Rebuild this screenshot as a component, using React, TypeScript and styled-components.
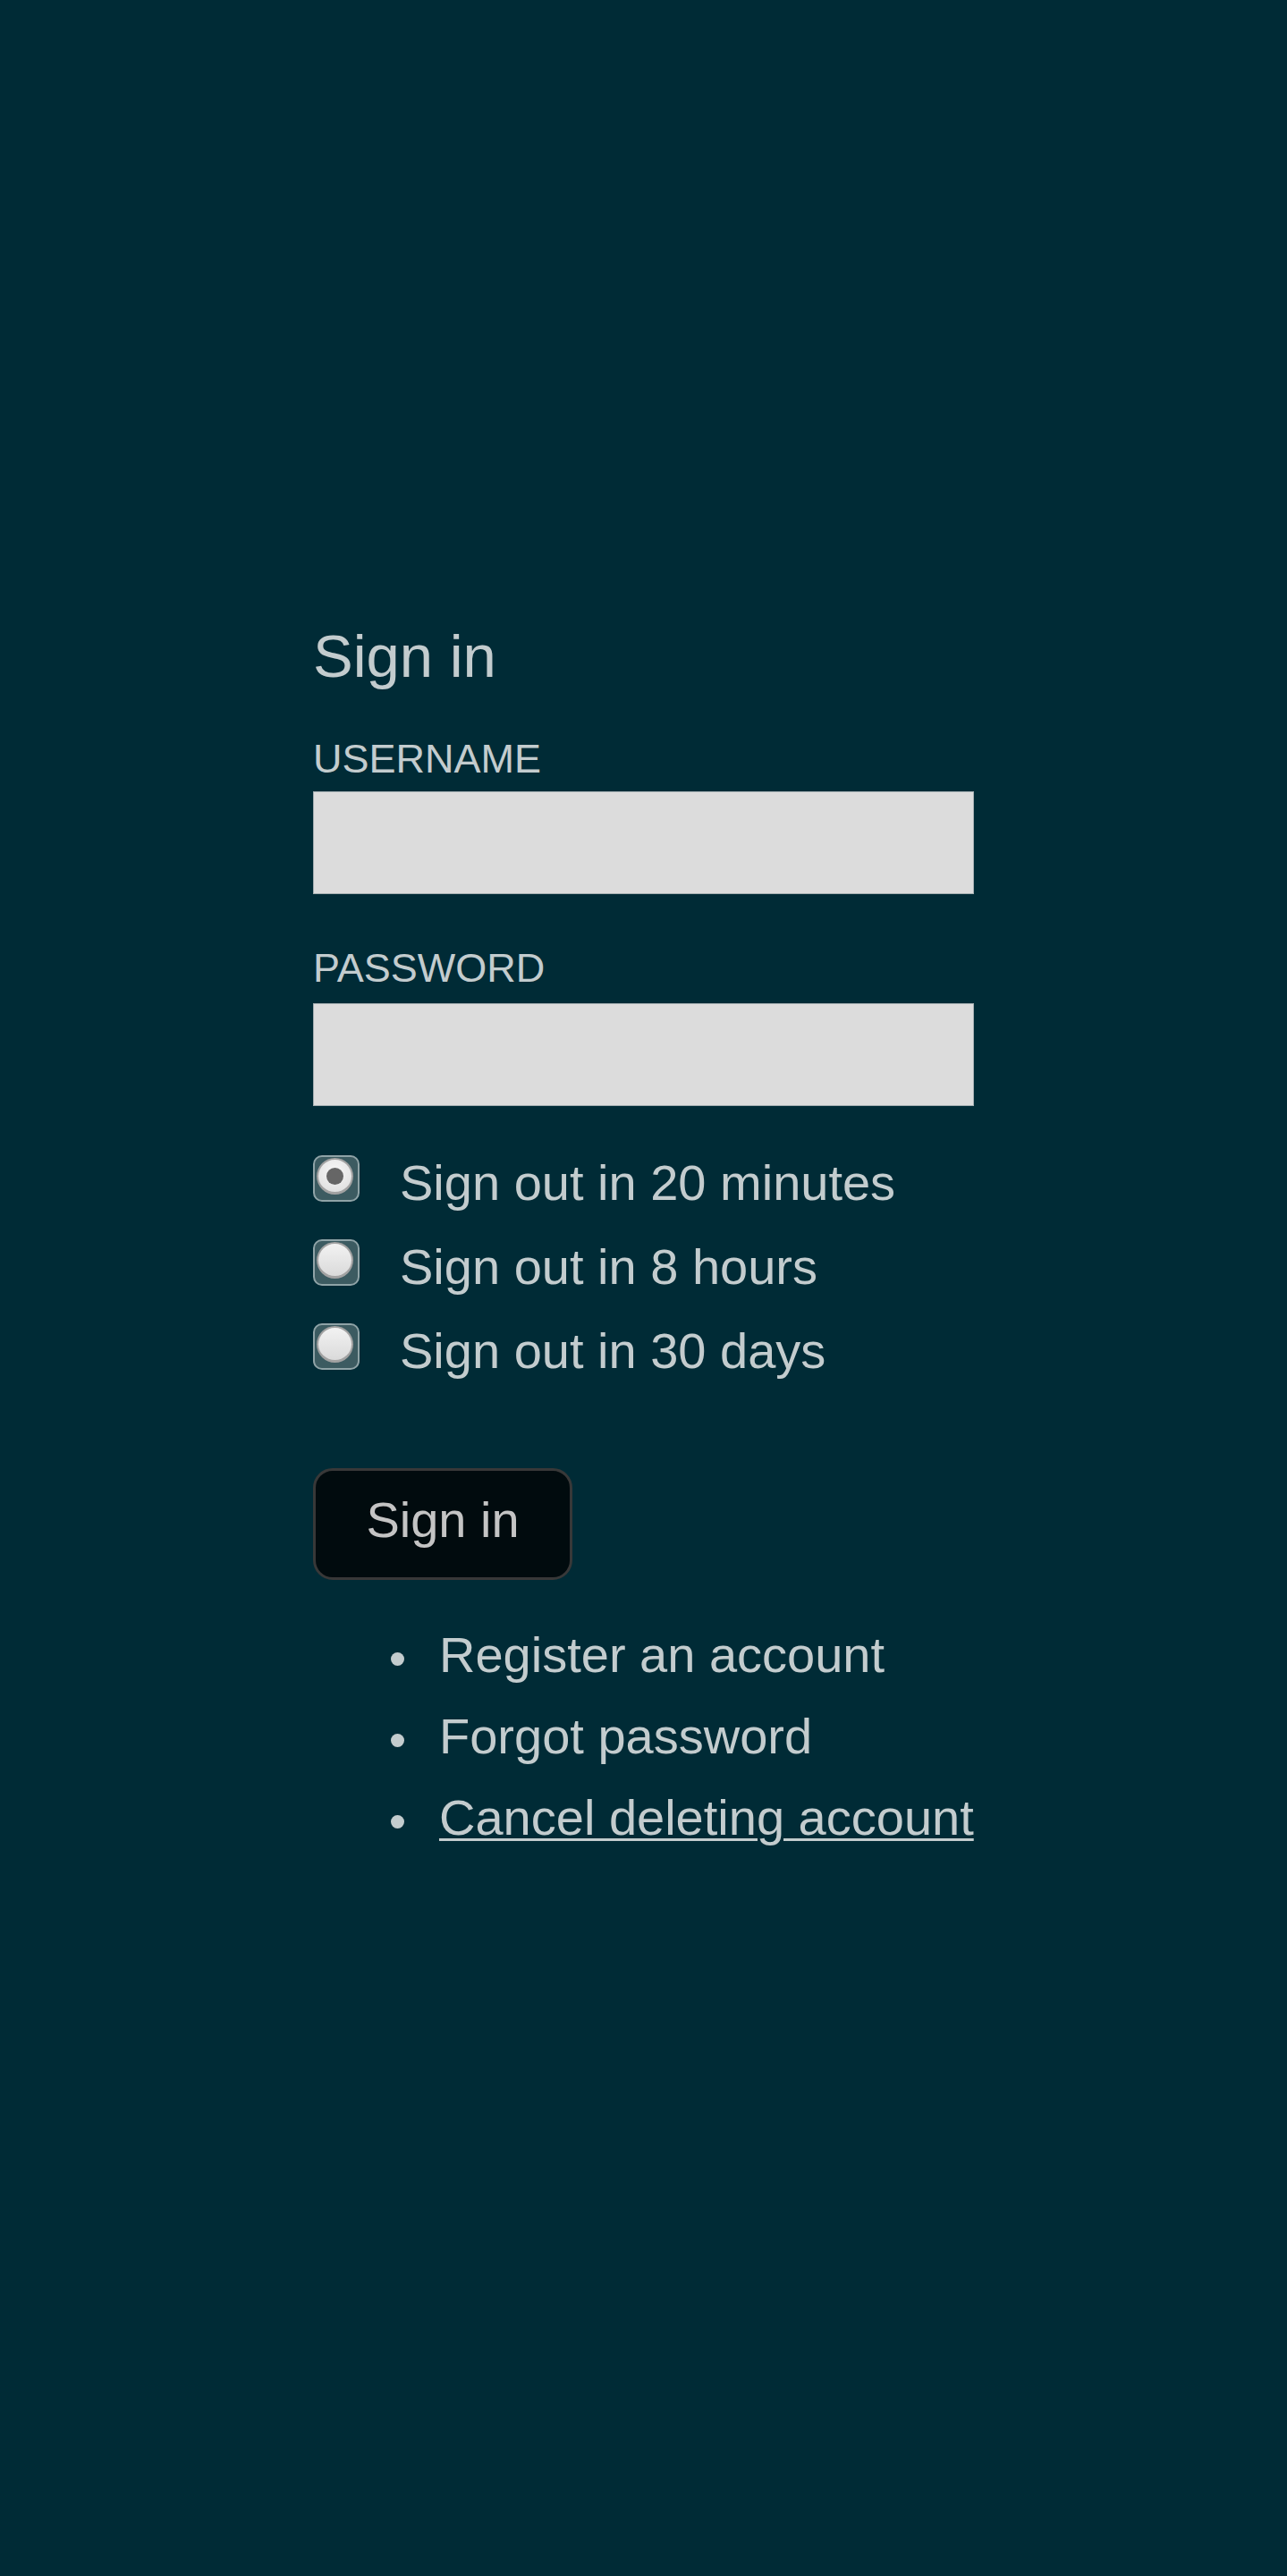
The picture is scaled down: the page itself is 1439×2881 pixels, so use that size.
import styled, { createGlobalStyle } from 'styled-components';

const GlobalStyle = createGlobalStyle`
  html,
  body {
    margin: 0;
    padding: 0;
    background: #002b36;
  }

  body {
    font-family: 'Liberation Sans', Arial, sans-serif;
    color: #c3ccce;
  }
`;

const Page = styled.main`
  min-height: 2881px;
  box-sizing: border-box;
  padding-top: 695px;
`;

const Form = styled.form`
  width: 739px;
  margin: 0 auto;
  display: flex;
  flex-direction: column;
`;

const Title = styled.h1`
  margin: 0;
  font-size: 67px;
  line-height: 77px;
  font-weight: 400;
`;

const FieldLabel = styled.label<{ $top: number }>`
  display: block;
  margin-top: ${(p) => p.$top}px;
  font-size: 45px;
  line-height: 50px;
  text-transform: uppercase;
`;

const TextInput = styled.input<{ $top: number }>`
  display: block;
  width: 100%;
  height: 115px;
  margin-top: ${(p) => p.$top}px;
  box-sizing: border-box;
  border: 1px solid #a3adb0;
  background: #dcdcdc;
  font-family: inherit;
  font-size: 44px;
  padding: 0 12px;
  outline: none;
`;

const Options = styled.div`
  margin-top: 39px;
  display: flex;
  flex-direction: column;
`;

const OptionRow = styled.label`
  display: flex;
  align-items: flex-start;
  height: 94px;
  font-size: 56px;
  line-height: 94px;
  cursor: pointer;
`;

const RadioBox = styled.span`
  flex: none;
  width: 52px;
  height: 52px;
  margin-top: 16px;
  box-sizing: border-box;
  padding: 1px 0 0 2px;
  border: 2.5px solid #8fa3a7;
  border-radius: 10px;
  background: #3c5b61;
`;

const RadioKnob = styled.span<{ $checked: boolean }>`
  display: flex;
  align-items: center;
  justify-content: center;
  width: 41px;
  height: 41px;
  box-sizing: border-box;
  border-radius: 50%;
  border: 2.5px solid #a2a2a2;
  border-bottom-width: 3.5px;
  background: ${(p) =>
    p.$checked
      ? 'radial-gradient(circle at 50% 35%, #f6f6f6 0%, #e4e4e4 70%, #d2d2d2 100%)'
      : 'linear-gradient(#f2f2f2, #dadada)'};

  &::after {
    content: '';
    display: ${(p) => (p.$checked ? 'block' : 'none')};
    width: 19px;
    height: 19px;
    border-radius: 50%;
    background: #666666;
  }
`;

const HiddenRadio = styled.input`
  display: none;
`;

const OptionText = styled.span`
  margin-left: 45px;
`;

const SubmitButton = styled.button`
  align-self: flex-start;
  margin-top: 84px;
  width: 290px;
  height: 125px;
  box-sizing: border-box;
  padding: 0 0 10px;
  border: 3px solid #383838;
  border-radius: 22px;
  background: #010b0e;
  color: #c4c4c4;
  font-family: inherit;
  font-size: 56px;
  cursor: pointer;
`;

const LinkList = styled.ul`
  margin: 38px 0 0;
  padding: 0;
  list-style: none;
  font-size: 56px;
  line-height: 91px;
`;

const LinkItem = styled.li`
  display: flex;
  align-items: center;
`;

const Bullet = styled.span`
  flex: none;
  width: 15px;
  height: 15px;
  margin: 10px 39px 0 87px;
  border-radius: 50%;
  background: #c3ccce;
`;

const Anchor = styled.a<{ $underline?: boolean }>`
  color: inherit;
  text-decoration: ${(p) => (p.$underline ? 'underline' : 'none')};
  text-decoration-thickness: 3px;
  text-underline-offset: 4px;
`;

const durations = [
  { value: '20m', label: 'Sign out in 20 minutes' },
  { value: '8h', label: 'Sign out in 8 hours' },
  { value: '30d', label: 'Sign out in 30 days' },
];

const links = [
  { href: '#register', label: 'Register an account' },
  { href: '#forgot', label: 'Forgot password' },
  { href: '#cancel', label: 'Cancel deleting account', underline: true },
];

export default function App() {
  const selected = '20m';

  return (
    <>
      <GlobalStyle />
      <Page>
        <Form onSubmit={(e) => e.preventDefault()}>
          <Title>Sign in</Title>

          <FieldLabel $top={52} htmlFor="username">
            Username
          </FieldLabel>
          <TextInput $top={11} id="username" type="text" />

          <FieldLabel $top={58} htmlFor="password">
            Password
          </FieldLabel>
          <TextInput $top={14} id="password" type="password" />

          <Options>
            {durations.map((d) => (
              <OptionRow key={d.value}>
                <HiddenRadio
                  type="radio"
                  name="duration"
                  value={d.value}
                  defaultChecked={d.value === selected}
                />
                <RadioBox>
                  <RadioKnob $checked={d.value === selected} />
                </RadioBox>
                <OptionText>{d.label}</OptionText>
              </OptionRow>
            ))}
          </Options>

          <SubmitButton type="submit">Sign in</SubmitButton>

          <LinkList>
            {links.map((l) => (
              <LinkItem key={l.href}>
                <Bullet />
                <Anchor href={l.href} $underline={l.underline}>
                  {l.label}
                </Anchor>
              </LinkItem>
            ))}
          </LinkList>
        </Form>
      </Page>
    </>
  );
}
